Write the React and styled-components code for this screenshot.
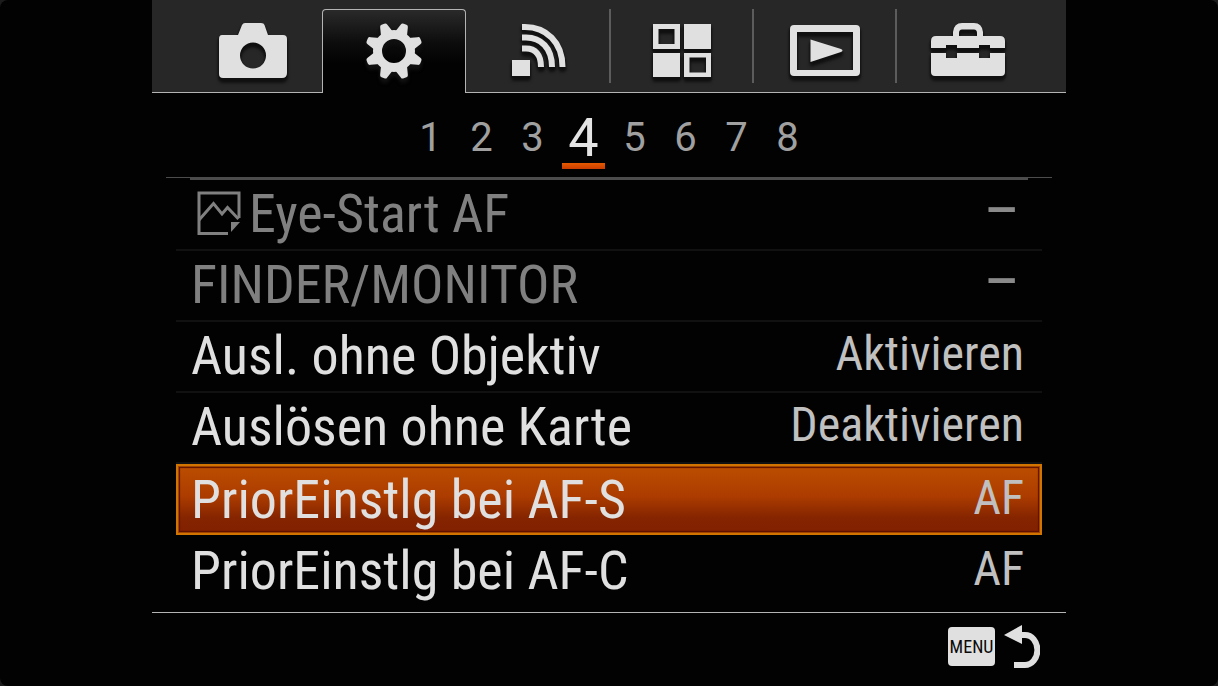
import React, { useState } from "react";
import styled, { createGlobalStyle, css } from "styled-components";

const GlobalStyle = createGlobalStyle`
  *, *::before, *::after { box-sizing: border-box; }
  body {
    margin: 0;
    background: #1c1c1c;
    font-family: "Roboto Condensed", "Liberation Sans Narrow", "Liberation Sans", sans-serif;
    color: #e0e0e0;
  }
  button {
    margin: 0;
    padding: 0;
    border: 0;
    background: none;
    color: inherit;
    font: inherit;
    cursor: pointer;
  }
`;

const Screen = styled.main`
  display: flex;
  flex-direction: column;
  min-height: 100vh;
  padding: 0 152px;
  background: #020202;
  border-radius: 8px;
`;

const TabBar = styled.nav`
  display: grid;
  grid-template-columns: repeat(6, 1fr);
  height: 93px;
  padding: 9px 28px 0;
  background: #272727;
  border-bottom: 1px solid #b4b4b4;
`;

const Tab = styled.button`
  display: flex;
  align-items: center;
  justify-content: center;
  margin-bottom: 9px;
  padding-top: 9px;
  border-left: 2px solid ${(p) => (p.$divided ? "#5c5c5c" : "transparent")};

  svg {
    overflow: visible;
    filter: drop-shadow(-1px 2px 1px #101010) drop-shadow(1px 3px 1px #101010);
  }

  ${(p) =>
    p.$active &&
    css`
      margin: 0 0 -1px -1px;
      padding-bottom: 10px;
      border: 1px solid #b4b4b4;
      border-bottom: 0;
      border-radius: 4px 4px 0 0;
      background: linear-gradient(#2a2a2a, #0c0c0c 40%, #020202 65%);
    `}
`;

const Pages = styled.nav`
  display: flex;
  justify-content: center;
  height: 85px;
  margin: 0 14px;
  border-bottom: 1px solid #4c4c4c;
  font-family: Roboto, sans-serif;
`;

const PageButton = styled.button`
  display: flex;
  flex-direction: column;
  align-items: center;
  width: 51px;
  padding-top: 17px;
  font-size: ${(p) => (p.$active ? "54px" : "40px")};
  line-height: 56px;
  color: ${(p) => (p.$active ? "#e4e4e4" : "#a0a0a0")};
`;

const PageNumber = styled.span`
  height: 53px;
`;

const PageMark = styled.span`
  width: 43px;
  height: 6px;
  background: linear-gradient(#e65a00, #c83c00);
`;

const List = styled.div`
  display: flex;
  flex: 1;
  flex-direction: column;
  margin: 0 24px;
  padding-bottom: 4px;
`;

const ListRule = styled.div`
  height: 2px;
  margin: 0 14px;
  background: #4c4c4c;
`;

const Row = styled.button`
  display: flex;
  flex: 1;
  align-items: center;
  justify-content: space-between;
  padding: 0 18px 2px 15px;
  border-bottom: 2px solid ${(p) => (p.$last ? "transparent" : "#111")};
  color: ${(p) => (p.disabled ? "#808080" : "#e0e0e0")};
  white-space: nowrap;

  ${(p) =>
    p.$selected &&
    css`
      margin-bottom: 2px;
      padding: 0 16px 0 13px;
      border: 2px solid #d27400;
      background: linear-gradient(#bc4e00, #ac3c00 45%, #842400 78%, #802000);
      box-shadow: inset 0 0 0 1px #a04400, inset 0 0 1px 2px #5c1000;
    `}
`;

const Label = styled.span`
  display: flex;
  align-items: center;
  gap: 8px;
  font-size: 54px;
  line-height: 64px;

  svg {
    margin-left: 6px;
  }
`;

const Value = styled.span`
  padding-bottom: 4px;
  font-size: 48px;
  line-height: 60px;
  color: #c0c0c0;

  ${(p) =>
    p.$dim &&
    css`
      padding-right: 4px;
      font-size: 64px;
      color: #8a8a8a;
    `}
`;

const Footer = styled.footer`
  display: flex;
  justify-content: flex-end;
  height: 74px;
  padding: 12px 26px 0;
  border-top: 1px solid #b4b4b4;
`;

const BackButton = styled.button`
  display: flex;
  align-items: flex-start;
  gap: 9px;
  height: 46px;
`;

const MenuKey = styled.span`
  width: 47px;
  height: 39px;
  margin-top: 2px;
  border-radius: 4px;
  background: #e0e0e0;
  color: #0a0a0a;
  font-size: 18px;
  line-height: 39px;
  text-align: center;
`;

const Camera = () => (
  <svg width="70" height="56" viewBox="0 0 70 56" fill="#e0e0e0">
    <path
      fillRule="evenodd"
      d="M4 12H20L24 2Q25 0 27 0H43Q46 0 46.500 2L50 12H65Q69 12 69 16V50Q69 55 64 55H5Q1 55 1 51V16Q1 12 4 12ZM35 19.500A13 13 0 1 0 35 45.500A13 13 0 1 0 35 19.500Z"
    />
  </svg>
);

const Gear = () => (
  <svg width="56" height="56" viewBox="-28 -28 56 56" fill="#e0e0e0">
    <circle r="16.500" fill="none" stroke="#e0e0e0" strokeWidth="9" />
    {[22.5, 67.5, 112.5, 157.5, 202.5, 247.5, 292.5, 337.5].map((angle) => (
      <path
        key={angle}
        transform={`rotate(${angle})`}
        d="M-6.500 -18L-3.800 -27Q-3.500 -29 -1.500 -29H1.500Q3.500 -29 3.800 -27L6.500 -18Z"
      />
    ))}
  </svg>
);

const Wireless = () => (
  <svg width="56" height="54" viewBox="0 0 56 54" fill="none" stroke="#e0e0e0" strokeWidth="6">
    <rect x="1" y="36" width="18" height="16" fill="#e0e0e0" stroke="none" />
    <path d="M11 3H14C35 3 51.500 18 51.500 43" />
    <path d="M11 13.500H15C30 13.500 41 24 41 43" />
    <path d="M11 24.500H15C24 24.500 30 30 30 43" />
  </svg>
);

const Apps = () => (
  <svg width="58" height="54" viewBox="0 0 58 54" fill="#e0e0e0">
    <path
      fillRule="evenodd"
      d="M0 0H27V25H0ZM5.500 5H21.500V20H5.500ZM31 0H58V25H31ZM0 29H27V53H0ZM31 29H58V53H31ZM36.500 33.500H53V48.500H36.500Z"
    />
  </svg>
);

const Playback = () => (
  <svg width="70" height="52" viewBox="0 0 70 52" fill="#e0e0e0">
    <path
      fillRule="evenodd"
      d="M4 0H66Q70 0 70 4V47Q70 51 66 51H4Q0 51 0 47V4Q0 0 4 0ZM7 7V45H63V7Z"
    />
    <path d="M20.500 14.500L51 24Q54 25.500 51 27L20.500 37Z" />
  </svg>
);

const Toolbox = () => (
  <svg width="74" height="56" viewBox="0 0 74 56" fill="#e0e0e0">
    <path
      fillRule="evenodd"
      d="M5 13H22V9Q23 0 31 0H43Q51 0 52 9V13H69Q74 13 74 18V25H59V22H48V25H26V22H15V25H0V18Q0 13 5 13ZM28 13H46V10Q46 6.500 43 6.500H31Q28 6.500 28 10Z"
    />
    <path d="M0 30H15V35H26V30H48V35H59V30H74V49Q74 53 70 53H4Q0 53 0 49Z" />
  </svg>
);

const StillImage = () => (
  <svg width="44" height="45" viewBox="0 0 44 45" fill="none" stroke="#808080" strokeWidth="3">
    <path d="M42 27V2H2V42.500H31" />
    <path d="M2 29L16.500 12.500L25 23L30.500 16.500L41.500 28" />
    <path d="M34 31H43L34 41Z" fill="#808080" stroke="none" />
  </svg>
);

const ReturnArrow = () => (
  <svg width="36" height="44" viewBox="0 0 36 44">
    <path d="M17 10H21A12 14.500 0 0 1 21 40H10" fill="none" stroke="#e0e0e0" strokeWidth="6" />
    <path d="M0 10L18 0V19Z" fill="#e0e0e0" />
  </svg>
);

const TABS = [
  { name: "Kamera", Icon: Camera },
  { name: "Benutzereinstellungen", Icon: Gear },
  { name: "Drahtlos", Icon: Wireless },
  { name: "Applikation", Icon: Apps, divided: true },
  { name: "Wiedergabe", Icon: Playback, divided: true },
  { name: "Setup", Icon: Toolbox, divided: true },
];

const ROWS = [
  { label: "Eye-Start AF", value: "–", disabled: true, Icon: StillImage },
  { label: "FINDER/MONITOR", value: "–", disabled: true },
  { label: "Ausl. ohne Objektiv", value: "Aktivieren" },
  { label: "Auslösen ohne Karte", value: "Deaktivieren" },
  { label: "PriorEinstlg bei AF-S", value: "AF" },
  { label: "PriorEinstlg bei AF-C", value: "AF" },
];

export default function App() {
  const [tab, setTab] = useState(1);
  const [page, setPage] = useState(4);
  const [selected, setSelected] = useState(4);

  return (
    <>
      <GlobalStyle />
      <Screen>
        <TabBar>
          {TABS.map(({ name, Icon, divided }, i) => (
            <Tab key={name} aria-label={name} $active={i === tab} $divided={divided} onClick={() => setTab(i)}>
              <Icon />
            </Tab>
          ))}
        </TabBar>
        <Pages>
          {[1, 2, 3, 4, 5, 6, 7, 8].map((n) => (
            <PageButton key={n} $active={n === page} onClick={() => setPage(n)}>
              <PageNumber>{n}</PageNumber>
              {n === page && <PageMark />}
            </PageButton>
          ))}
        </Pages>
        <List>
          <ListRule />
          {ROWS.map(({ label, value, disabled, Icon }, i) => (
            <Row
              key={label}
              disabled={disabled}
              $selected={i === selected}
              $last={i === ROWS.length - 1}
              onClick={() => setSelected(i)}
            >
              <Label>
                {Icon && <Icon />}
                {label}
              </Label>
              <Value $dim={disabled}>{value}</Value>
            </Row>
          ))}
        </List>
        <Footer>
          <BackButton aria-label="MENU zurück">
            <MenuKey>MENU</MenuKey>
            <ReturnArrow />
          </BackButton>
        </Footer>
      </Screen>
    </>
  );
}
